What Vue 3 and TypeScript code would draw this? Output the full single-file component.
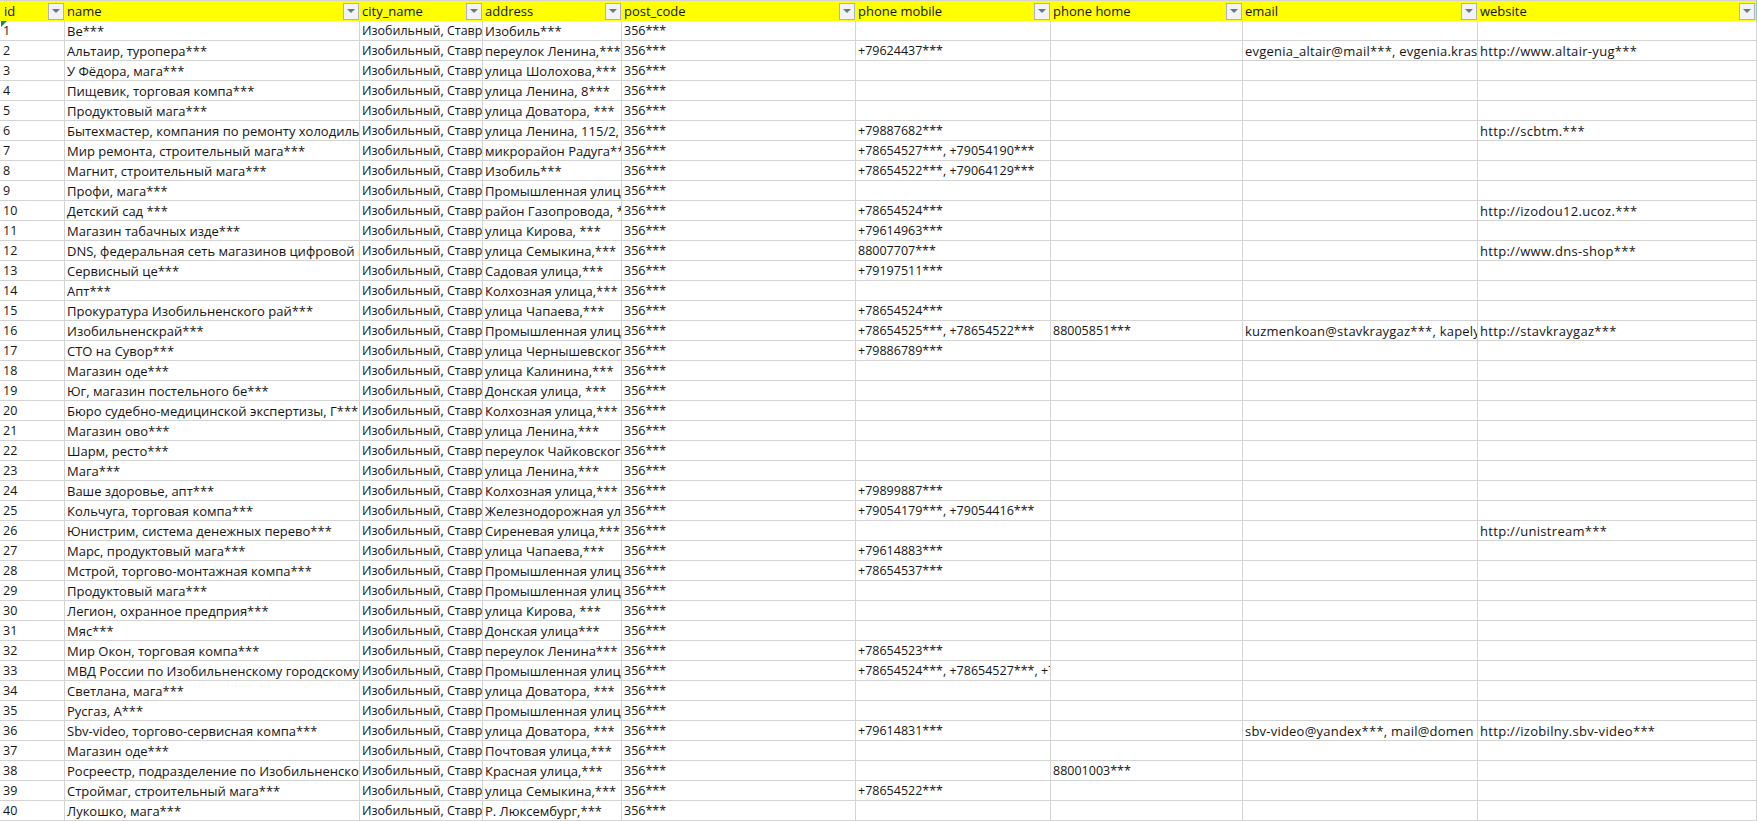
<script setup lang="ts">
interface Row {
  name: string
  address: string
  mobile?: string
  home?: string
  email?: string
  website?: string
}

const headers: string[] = ['id', 'name', 'city_name', 'address', 'post_code', 'phone mobile', 'phone home', 'email', 'website']
const widths: number[] = [65, 295, 123, 139, 234, 195, 192, 235, 279]

const rows: Row[] = [
  { name: 'Ве***', address: 'Изобиль***' },
  { name: 'Альтаир, туропера***', address: 'переулок Ленина,***', mobile: '+79624437***', email: 'evgenia_altair@mail***, evgenia.kras', website: 'http://www.altair-yug***' },
  { name: 'У Фёдора, мага***', address: 'улица Шолохова,***' },
  { name: 'Пищевик, торговая компа***', address: 'улица Ленина, 8***' },
  { name: 'Продуктовый мага***', address: 'улица Доватора, ***' },
  { name: 'Бытехмастер, компания по ремонту холодиль', address: 'улица Ленина, 115/2,', mobile: '+79887682***', website: 'http://scbtm.***' },
  { name: 'Мир ремонта, строительный мага***', address: 'микрорайон Радуга***', mobile: '+78654527***, +79054190***' },
  { name: 'Магнит, строительный мага***', address: 'Изобиль***', mobile: '+78654522***, +79064129***' },
  { name: 'Профи, мага***', address: 'Промышленная улица' },
  { name: 'Детский сад ***', address: 'район Газопровода, ***', mobile: '+78654524***', website: 'http://izodou12.ucoz.***' },
  { name: 'Магазин табачных изде***', address: 'улица Кирова, ***', mobile: '+79614963***' },
  { name: 'DNS, федеральная сеть магазинов цифровой и', address: 'улица Семыкина,***', mobile: '88007707***', website: 'http://www.dns-shop***' },
  { name: 'Сервисный це***', address: 'Садовая улица,***', mobile: '+79197511***' },
  { name: 'Апт***', address: 'Колхозная улица,***' },
  { name: 'Прокуратура Изобильненского рай***', address: 'улица Чапаева,***', mobile: '+78654524***' },
  { name: 'Изобильненскрай***', address: 'Промышленная улица', mobile: '+78654525***, +78654522***', home: '88005851***', email: 'kuzmenkoan@stavkraygaz***, kapely', website: 'http://stavkraygaz***' },
  { name: 'СТО на Сувор***', address: 'улица Чернышевского', mobile: '+79886789***' },
  { name: 'Магазин оде***', address: 'улица Калинина,***' },
  { name: 'Юг, магазин постельного бе***', address: 'Донская улица, ***' },
  { name: 'Бюро судебно-медицинской экспертизы, Г***', address: 'Колхозная улица,***' },
  { name: 'Магазин ово***', address: 'улица Ленина,***' },
  { name: 'Шарм, ресто***', address: 'переулок Чайковского' },
  { name: 'Мага***', address: 'улица Ленина,***' },
  { name: 'Ваше здоровье, апт***', address: 'Колхозная улица,***', mobile: '+79899887***' },
  { name: 'Кольчуга, торговая компа***', address: 'Железнодорожная ул', mobile: '+79054179***, +79054416***' },
  { name: 'Юнистрим, система денежных перево***', address: 'Сиреневая улица,***', website: 'http://unistream***' },
  { name: 'Марс, продуктовый мага***', address: 'улица Чапаева,***', mobile: '+79614883***' },
  { name: 'Мстрой, торгово-монтажная компа***', address: 'Промышленная улица', mobile: '+78654537***' },
  { name: 'Продуктовый мага***', address: 'Промышленная улица' },
  { name: 'Легион, охранное предприя***', address: 'улица Кирова, ***' },
  { name: 'Мяс***', address: 'Донская улица***' },
  { name: 'Мир Окон, торговая компа***', address: 'переулок Ленина***', mobile: '+78654523***' },
  { name: 'МВД России по Изобильненскому городскому', address: 'Промышленная улица', mobile: '+78654524***, +78654527***, +7' },
  { name: 'Светлана, мага***', address: 'улица Доватора, ***' },
  { name: 'Русгаз, А***', address: 'Промышленная улица' },
  { name: 'Sbv-video, торгово-сервисная компа***', address: 'улица Доватора, ***', mobile: '+79614831***', email: 'sbv-video@yandex***, mail@domen', website: 'http://izobilny.sbv-video***' },
  { name: 'Магазин оде***', address: 'Почтовая улица,***' },
  { name: 'Росреестр, подразделение по Изобильненско', address: 'Красная улица,***', home: '88001003***' },
  { name: 'Строймаг, строительный мага***', address: 'улица Семыкина,***', mobile: '+78654522***' },
  { name: 'Лукошко, мага***', address: 'Р. Люксембург,***' },
]

const city = 'Изобильный, Ставро'
const postCode = '356***'
</script>

<template>
  <table class="sheet">
    <colgroup>
      <col v-for="(w, i) in widths" :key="i" :style="{ width: w + 'px' }" />
    </colgroup>
    <thead>
      <tr>
        <th v-for="h in headers" :key="h">
          <div class="head">
            <span>{{ h }}</span>
            <span class="filter"><i class="arrow"></i></span>
          </div>
        </th>
      </tr>
    </thead>
    <tbody>
      <tr v-for="(r, i) in rows" :key="i">
        <td class="num id">
          <i v-if="i === 0" class="flag"></i>{{ i + 1 }}
        </td>
        <td>{{ r.name }}</td>
        <td class="num">{{ city }}</td>
        <td>{{ r.address }}</td>
        <td class="num">{{ postCode }}</td>
        <td class="num">{{ r.mobile }}</td>
        <td class="num">{{ r.home }}</td>
        <td class="latin">{{ r.email }}</td>
        <td class="latin url">{{ r.website }}</td>
      </tr>
    </tbody>
  </table>
</template>

<style>
html,
body {
  margin: 0;
  background: #fff;
}
</style>

<style scoped>
.sheet {
  table-layout: fixed;
  border-collapse: separate;
  border-spacing: 0;
  width: 1757px;
  font-family: "Open Sans", "Noto Sans", sans-serif;
  font-size: 13px;
  color: #151515;
}
th {
  height: 21px;
  padding: 0;
  box-sizing: border-box;
  border-top: 1px solid #d4d4d4;
  background: #ffff00;
  font-weight: 400;
  text-align: left;
}
th:first-child .head {
  padding-left: 4px;
}
th:last-child {
  border-right: 1px solid #7fdca8;
}
.head {
  display: flex;
  align-items: center;
  justify-content: space-between;
  height: 20px;
  padding: 0 1px 0 2px;
}
.filter {
  display: flex;
  align-items: center;
  justify-content: center;
  flex: none;
  box-sizing: border-box;
  width: 16px;
  height: 17px;
  border: 1px solid #acb2c2;
  background: #f1f3f7;
}
.arrow {
  display: block;
  width: 0;
  height: 0;
  border-left: 4px solid transparent;
  border-right: 4px solid transparent;
  border-top: 4px solid #70757f;
}
td {
  position: relative;
  height: 20px;
  padding: 1px 0 0 2px;
  box-sizing: border-box;
  border-right: 1px solid #d4d4d4;
  border-bottom: 1px solid #d4d4d4;
  line-height: 18px;
  white-space: nowrap;
  overflow: hidden;
}
td.num {
  font-size: 12.5px;
}
td.id {
  padding-left: 3px;
}
td.latin {
  letter-spacing: 0.22px;
}
td.url {
  letter-spacing: 0.3px;
}
.flag {
  position: absolute;
  left: 1px;
  top: 0;
  width: 0;
  height: 0;
  border-top: 6px solid #1a8a32;
  border-right: 6px solid transparent;
}
</style>
